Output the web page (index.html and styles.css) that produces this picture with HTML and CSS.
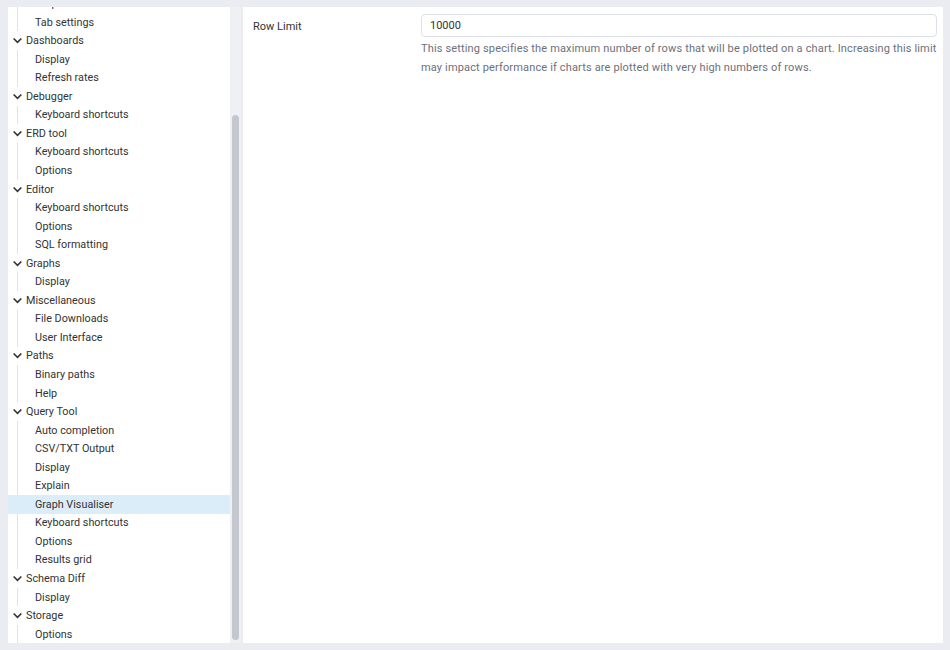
FILE: index.html
```html
<!DOCTYPE html>
<html lang="en">
<head>
  <meta charset="UTF-8">
  <title>Preferences</title>
  <link rel="stylesheet" href="styles.css">
</head>
<body>
  <div class="prefs">
    <!-- Preference tree with its scrollbar -->
    <div class="tree-panel">
      <div class="tree" id="prefTree">
        <div class="group"><span class="chev"><svg viewBox="0 0 10 10"><path d="M1.5 3.2 L5 6.7 L8.5 3.2"/></svg></span>Browser</div>
        <div class="item">Display</div>
        <div class="item">Keyboard shortcuts</div>
        <div class="item">Nodes</div>
        <div class="item">Object explorer</div>
        <div class="item">Processes</div>
        <div class="item">Properties</div>
        <div class="item">Tab settings</div>
        <div class="group"><span class="chev"><svg viewBox="0 0 10 10"><path d="M1.5 3.2 L5 6.7 L8.5 3.2"/></svg></span>Dashboards</div>
        <div class="item">Display</div>
        <div class="item">Refresh rates</div>
        <div class="group"><span class="chev"><svg viewBox="0 0 10 10"><path d="M1.5 3.2 L5 6.7 L8.5 3.2"/></svg></span>Debugger</div>
        <div class="item">Keyboard shortcuts</div>
        <div class="group"><span class="chev"><svg viewBox="0 0 10 10"><path d="M1.5 3.2 L5 6.7 L8.5 3.2"/></svg></span>ERD tool</div>
        <div class="item">Keyboard shortcuts</div>
        <div class="item">Options</div>
        <div class="group"><span class="chev"><svg viewBox="0 0 10 10"><path d="M1.5 3.2 L5 6.7 L8.5 3.2"/></svg></span>Editor</div>
        <div class="item">Keyboard shortcuts</div>
        <div class="item">Options</div>
        <div class="item">SQL formatting</div>
        <div class="group"><span class="chev"><svg viewBox="0 0 10 10"><path d="M1.5 3.2 L5 6.7 L8.5 3.2"/></svg></span>Graphs</div>
        <div class="item">Display</div>
        <div class="group"><span class="chev"><svg viewBox="0 0 10 10"><path d="M1.5 3.2 L5 6.7 L8.5 3.2"/></svg></span>Miscellaneous</div>
        <div class="item">File Downloads</div>
        <div class="item">User Interface</div>
        <div class="group"><span class="chev"><svg viewBox="0 0 10 10"><path d="M1.5 3.2 L5 6.7 L8.5 3.2"/></svg></span>Paths</div>
        <div class="item">Binary paths</div>
        <div class="item">Help</div>
        <div class="group"><span class="chev"><svg viewBox="0 0 10 10"><path d="M1.5 3.2 L5 6.7 L8.5 3.2"/></svg></span>Query Tool</div>
        <div class="item">Auto completion</div>
        <div class="item">CSV/TXT Output</div>
        <div class="item">Display</div>
        <div class="item">Explain</div>
        <div class="item selected">Graph Visualiser</div>
        <div class="item">Keyboard shortcuts</div>
        <div class="item">Options</div>
        <div class="item">Results grid</div>
        <div class="group"><span class="chev"><svg viewBox="0 0 10 10"><path d="M1.5 3.2 L5 6.7 L8.5 3.2"/></svg></span>Schema Diff</div>
        <div class="item">Display</div>
        <div class="group"><span class="chev"><svg viewBox="0 0 10 10"><path d="M1.5 3.2 L5 6.7 L8.5 3.2"/></svg></span>Storage</div>
        <div class="item">Options</div>
      </div>
      <div class="scroll-track"><div class="scroll-thumb"></div></div>
    </div>

    <!-- Settings for the selected node -->
    <div class="content">
      <div class="field">
        <label class="field-label" for="rowLimit">Row Limit</label>
        <div class="field-body">
          <input class="text-input" id="rowLimit" type="text" value="10000">
          <p class="help">This setting specifies the maximum number of rows that will be plotted on a chart. Increasing this limit may impact performance if charts are plotted with very high numbers of rows.</p>
        </div>
      </div>
    </div>
  </div>

  <script>
    document.getElementById("prefTree").scrollTop = 128;
  </script>
</body>
</html>
```

FILE: styles.css
```css
/* Preferences dialog layout */
body {
  margin: 0;
  padding: 7px 7px 7px 8px;
  background: #ebecf1;
  font-family: Roboto, "Liberation Sans", sans-serif;
  color: #333;
}
.prefs {
  display: flex;
  gap: 2px;
  height: 636px;
}
.tree-panel {
  width: 233px;
  flex: none;
  display: flex;
}
.tree {
  flex: 1;
  background: #fff;
  overflow: hidden;
  padding-top: 4px;
  box-sizing: border-box;
  font-size: 10.8px;
}
.scroll-track {
  width: 11px;
  flex: none;
  background: #eef0f4;
}
.scroll-thumb {
  width: 7px;
  height: 525px;
  margin: 108px 0 0 2px;
  background: #c4c7ce;
  border-radius: 4px;
}
.group, .item {
  height: 18.55px;
  display: flex;
  align-items: center;
  white-space: nowrap;
}
.group {
  padding-left: 4px;
}
.chev {
  width: 11px;
  height: 11px;
  margin-right: 3px;
  display: flex;
}
.chev svg {
  width: 11px;
  height: 11px;
  fill: none;
  stroke: #333;
  stroke-width: 1.5;
}
.item {
  padding-left: 27px;
  background: linear-gradient(#dfe2e7, #dfe2e7) 9px 0 / 1px 100% no-repeat;
}
.item.selected {
  background: #dbedf9;
}

/* Right hand form */
.content {
  flex: 1;
  background: #fff;
  padding: 7px 6px 0 10px;
}
.field {
  display: flex;
}
.field-label {
  width: 168px;
  flex: none;
  font-size: 11px;
  padding-top: 6px;
}
.field-body {
  flex: 1;
}
.text-input {
  display: block;
  width: 100%;
  height: 23px;
  box-sizing: border-box;
  border: 1px solid #dde0e6;
  border-radius: 4px;
  padding: 0 8px;
  font-family: inherit;
  font-size: 11px;
  color: #333;
  outline: none;
}
.help {
  margin: 2px 0 0;
  font-size: 11px;
  line-height: 19px;
  letter-spacing: 0.15px;
  color: #6c707a;
}
```
